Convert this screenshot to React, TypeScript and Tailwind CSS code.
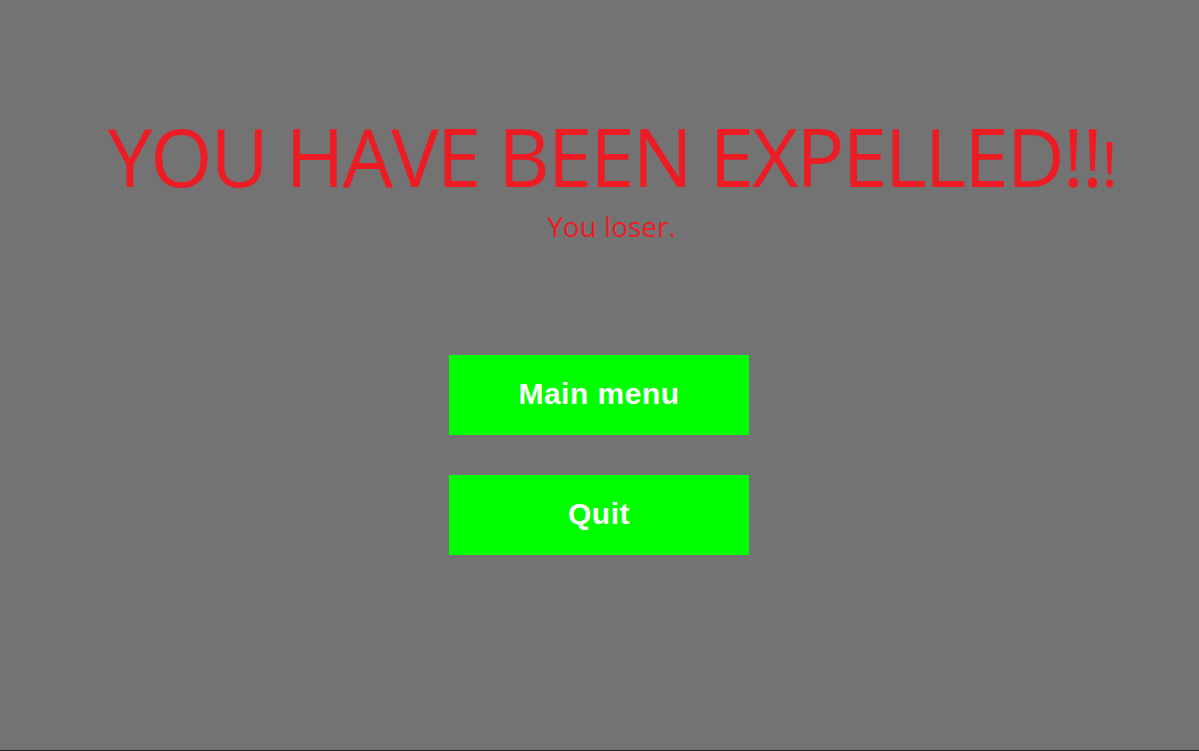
export default function App() {
  return (
    <div className="flex h-[751px] w-full flex-col items-center border-b border-[#262626] bg-[#737373]">
      <div className="flex flex-col items-center pl-6 text-[#ed1c24] [font-family:'Open_Sans',sans-serif]">
        <h1 className="mt-[116px] whitespace-nowrap text-[80px] leading-none tracking-[-2px]">
          YOU HAVE BEEN EXPELLED!!<span className="text-[62px]">!</span>
        </h1>
        <p className="mt-[16px] text-[28px] leading-none">You loser.</p>
      </div>
      <div className="mt-[115px] flex flex-col gap-10 pr-px">
        <button className="flex h-20 w-[300px] items-center justify-center bg-[#00ff00] pb-1 text-[30px] font-bold tracking-[0.5px] text-white [font-family:'Liberation_Sans',Arial,sans-serif]">
          Main menu
        </button>
        <button className="flex h-20 w-[300px] items-center justify-center bg-[#00ff00] pb-1 text-[30px] font-bold tracking-[0.5px] text-white [font-family:'Liberation_Sans',Arial,sans-serif]">
          Quit
        </button>
      </div>
    </div>
  );
}
